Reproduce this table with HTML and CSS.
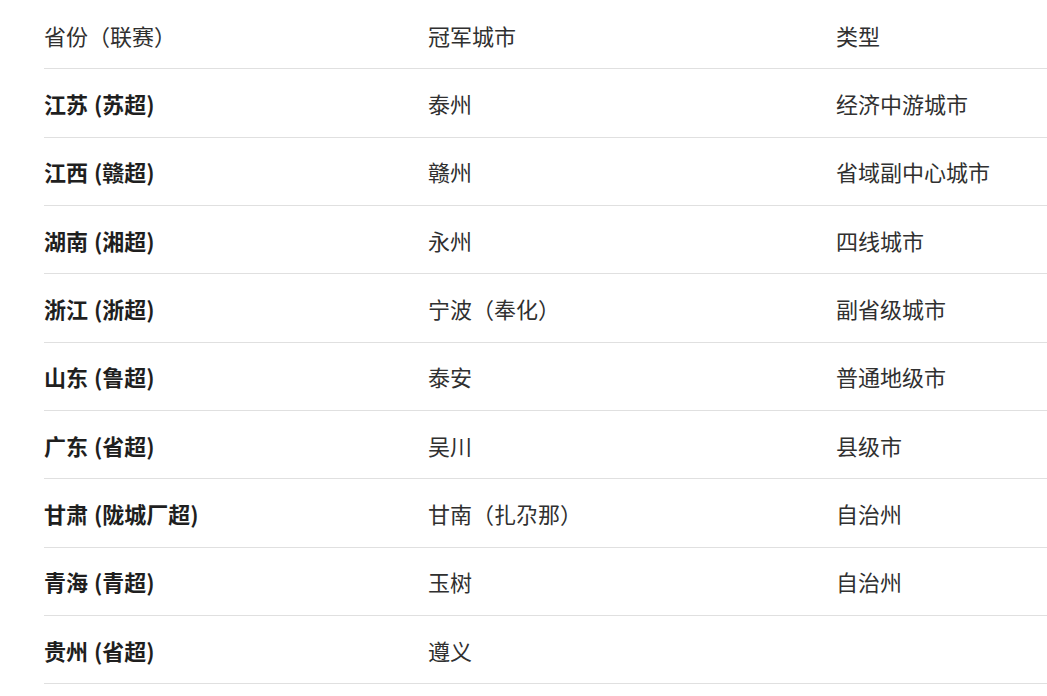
FILE: index.html
```html
<!DOCTYPE html>
<html lang="zh-CN">
<head>
<meta charset="utf-8">
<link rel="stylesheet" href="styles.css">
</head>
<body>
<div class="table">
  <div class="row head"><div class="c1">省份（联赛）</div><div class="c2">冠军城市</div><div class="c3">类型</div></div>
  <div class="row"><div class="c1 b">江苏 (苏超)</div><div class="c2">泰州</div><div class="c3">经济中游城市</div></div>
  <div class="row"><div class="c1 b">江西 (赣超)</div><div class="c2">赣州</div><div class="c3">省域副中心城市</div></div>
  <div class="row"><div class="c1 b">湖南 (湘超)</div><div class="c2">永州</div><div class="c3">四线城市</div></div>
  <div class="row"><div class="c1 b">浙江 (浙超)</div><div class="c2">宁波（奉化）</div><div class="c3">副省级城市</div></div>
  <div class="row"><div class="c1 b">山东 (鲁超)</div><div class="c2">泰安</div><div class="c3">普通地级市</div></div>
  <div class="row"><div class="c1 b">广东 (省超)</div><div class="c2">吴川</div><div class="c3">县级市</div></div>
  <div class="row"><div class="c1 b">甘肃 (陇城厂超)</div><div class="c2">甘南（扎尕那）</div><div class="c3">自治州</div></div>
  <div class="row"><div class="c1 b">青海 (青超)</div><div class="c2">玉树</div><div class="c3">自治州</div></div>
  <div class="row"><div class="c1 b">贵州 (省超)</div><div class="c2">遵义</div><div class="c3"></div></div>
</div>
</body>
</html>
```
FILE: styles.css
```css
html, body {
  margin: 0;
  padding: 0;
  background: #ffffff;
  overflow: hidden;
}
body {
  font-family: "Noto Sans CJK SC", "Noto Sans", sans-serif;
  font-size: 22px;
  color: #303030;
}
.table {
  margin-left: 44px;
  padding-top: 1px;
}
.row {
  display: grid;
  grid-template-columns: 384px 408px 1fr;
  align-items: center;
  height: 68.33px;
  box-sizing: border-box;
  border-bottom: 1px solid #e0e0e0;
}
.row > div {
  line-height: 1;
  white-space: nowrap;
}
.b {
  font-weight: 700;
  color: #1f1f1f;
  word-spacing: 1px;
}
```
